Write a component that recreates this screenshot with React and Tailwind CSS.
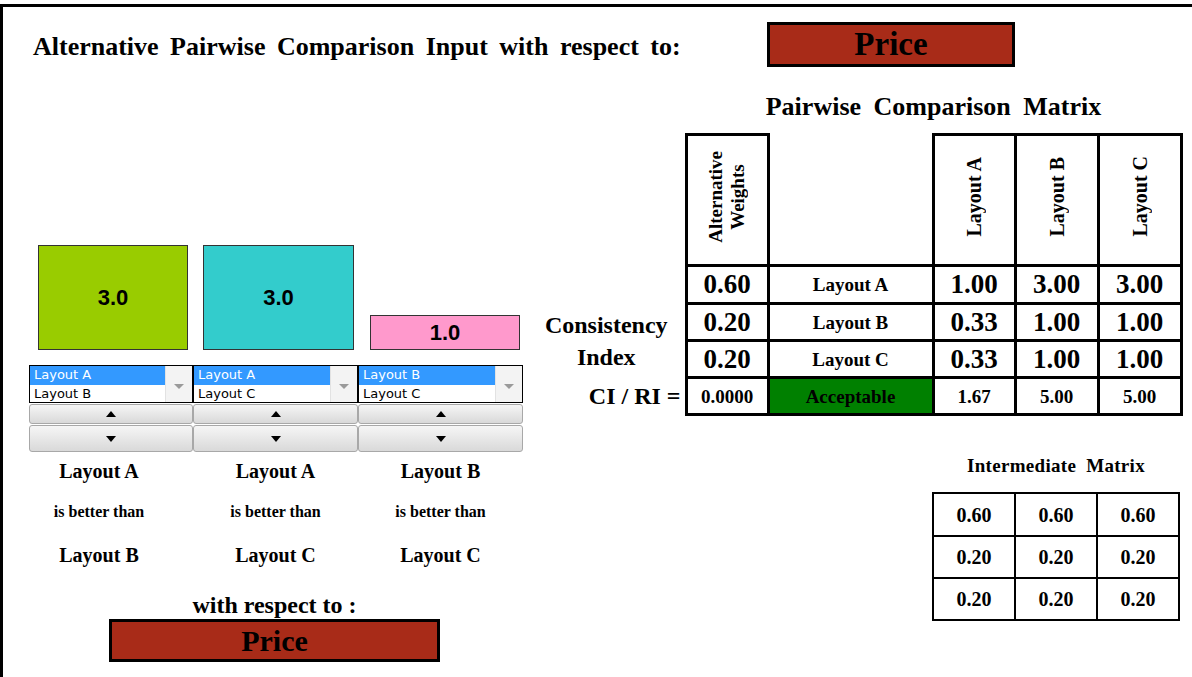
import React from 'react';

const serif = "font-['Liberation_Serif','Times_New_Roman',serif]";

const pairs = [
  { value: '3.0', color: 'bg-[#99cc00]', bar: 'ml-[35px] w-[150px] h-[105px]', top: 'Layout A', bottom: 'Layout B', box: 'Layout A', second: 'Layout B' },
  { value: '3.0', color: 'bg-[#33cccc]', bar: 'ml-[15px] w-[151px] h-[105px]', top: 'Layout A', bottom: 'Layout C', box: 'Layout A', second: 'Layout C' },
  { value: '1.0', color: 'bg-[#ff99cc]', bar: 'ml-[16px] w-[150px] h-[35px]', top: 'Layout B', bottom: 'Layout C', box: 'Layout B', second: 'Layout C' },
];

const labelCols = ['w-[158px]', 'w-[195px]', 'w-[135px]'];
const listCols = ['w-[164px]', 'w-[165px]', 'w-[165px]'];

const matrix = [
  ['0.60', 'Layout A', '1.00', '3.00', '3.00'],
  ['0.20', 'Layout B', '0.33', '1.00', '1.00'],
  ['0.20', 'Layout C', '0.33', '1.00', '1.00'],
];

const intermediate = [
  ['0.60', '0.60', '0.60'],
  ['0.20', '0.20', '0.20'],
  ['0.20', '0.20', '0.20'],
];

const cell = 'border-[3px] border-black text-center align-middle p-0';

function Triangle({ up }) {
  return up ? (
    <span className="block w-0 h-0 border-x-[5px] border-x-transparent border-b-[6px] border-b-black" />
  ) : (
    <span className="block w-0 h-0 border-x-[5px] border-x-transparent border-t-[6px] border-t-black" />
  );
}

function Spinner({ first, second, width }) {
  return (
    <div className={`${width} flex flex-col`}>
      <div className="h-[38px] border border-black flex bg-white font-['DejaVu_Sans',sans-serif] font-normal text-[13px] leading-[18px]">
        <div className="flex-1 flex flex-col">
          <div className="h-[19px] bg-[#3399ff] text-white pl-[4px]">{first}</div>
          <div className="h-[17px] text-black pl-[4px]">{second}</div>
        </div>
        <div className="w-[27px] bg-[#f3f3f3] border-l border-[#e2e2e2] flex items-center justify-center pt-[4px]">
          <span className="block w-0 h-0 border-x-[5px] border-x-transparent border-t-[5px] border-t-[#9a9a9a]" />
        </div>
      </div>
      <button className="mt-[1px] h-[20px] rounded-[3px] border border-[#a8a8a8] bg-gradient-to-b from-[#f6f6f6] to-[#d9d9d9] flex items-center justify-center">
        <Triangle up />
      </button>
      <button className="mt-[1px] h-[27px] rounded-[3px] border border-[#a8a8a8] bg-gradient-to-b from-[#f6f6f6] to-[#d9d9d9] flex items-center justify-center">
        <Triangle />
      </button>
    </div>
  );
}

export default function App() {
  return (
    <div className={`w-[1192px] h-[677px] overflow-hidden bg-white pt-[4px] ${serif} font-bold text-black`}>
      <div className="h-[673px] border-l-[3px] border-t-[3px] border-black">
        {/* title row */}
        <div className="flex items-center h-[45px] mt-[15px]">
          <h1 className="ml-[30px] w-[734px] text-[26px] leading-[28px] pt-[4px] [word-spacing:5px]">
            Alternative Pairwise Comparison Input with respect to:
          </h1>
          <div className="w-[248px] h-[45px] border-[3px] border-black bg-[#a82b18] flex items-center justify-center text-[33px] leading-none">
            Price
          </div>
        </div>

        <div className="flex">
          {/* left: comparison inputs */}
          <div className="w-[527px] flex flex-col">
            <div className="mt-[178px] h-[105px] flex items-end">
              {pairs.map((p, i) => (
                <div
                  key={i}
                  className={`${p.bar} ${p.color} border border-[#333] flex items-center justify-center font-['Liberation_Sans',Arial,sans-serif] text-[22px]`}
                >
                  {p.value}
                </div>
              ))}
            </div>

            <div className="mt-[15px] ml-[26px] flex">
              {pairs.map((p, i) => (
                <Spinner key={i} first={p.box} second={p.second} width={listCols[i]} />
              ))}
            </div>

            <div className="ml-[17px] flex">
              {pairs.map((p, i) => (
                <div key={i} className={`${labelCols[i]} flex flex-col items-center text-center`}>
                  <div className="h-[38px] flex items-center text-[20px]">{p.top}</div>
                  <div className="h-[44px] flex items-center text-[16px]">is better than</div>
                  <div className="h-[42px] flex items-center text-[20px]">{p.bottom}</div>
                </div>
              ))}
            </div>

            <div className="ml-[106px] w-[331px] h-[43px] flex items-end justify-center pb-[2px] text-[24px] leading-[24px]">
              with respect to :
            </div>
            <div className="ml-[106px] w-[331px] h-[43px] border-[3px] border-black bg-[#a82b18] flex items-center justify-center text-[30px] leading-none">
              Price
            </div>
          </div>

          {/* right: matrices */}
          <div className="w-[662px]">
            <div className="h-[66px] pt-[27px]">
              <div className="ml-[156px] w-[495px] text-center text-[26px] leading-[26px] [word-spacing:6px]">
                Pairwise Comparison Matrix
              </div>
            </div>

            <table className="border-collapse table-fixed w-[651px]">
              <colgroup>
                <col className="w-[156px]" />
                <col className="w-[82px]" />
                <col className="w-[165px]" />
                <col className="w-[82px]" />
                <col className="w-[83px]" />
                <col className="w-[83px]" />
              </colgroup>
              <tbody>
                <tr className="h-[131px]">
                  <td className="p-0" />
                  <td className={cell}>
                    <div className="inline-block [writing-mode:vertical-rl] rotate-180 text-[19px] leading-[22px] text-center">
                      Alternative
                      <br />
                      Weights
                    </div>
                  </td>
                  <td className="p-0 border-x-[3px] border-black" />
                  {['Layout A', 'Layout B', 'Layout C'].map((h) => (
                    <td key={h} className={cell}>
                      <div className="inline-block [writing-mode:vertical-rl] rotate-180 text-[20px] leading-[22px]">{h}</div>
                    </td>
                  ))}
                </tr>
                {matrix.map((row, r) => (
                  <tr key={r} className={r === 0 ? 'h-[38px]' : 'h-[37px]'}>
                    {r === 0 && <td className="p-0" />}
                    {r === 1 && (
                      <td rowSpan={2} className="p-0 pr-[2px] text-center align-middle text-[24px] leading-[32px]">
                        <div>Consistency</div>
                        <div>Index</div>
                      </td>
                    )}
                    <td className={`${cell} text-[27px] leading-none`}>{row[0]}</td>
                    <td className={`${cell} text-[19px] leading-none`}>{row[1]}</td>
                    {row.slice(2).map((v, c) => (
                      <td key={c} className={`${cell} text-[27px] leading-none`}>{v}</td>
                    ))}
                  </tr>
                ))}
                <tr className="h-[37px]">
                  <td className="p-0 pr-[4px] text-right text-[24px] leading-none">CI / RI =</td>
                  <td className={`${cell} text-[19px] leading-none`}>0.0000</td>
                  <td className={`${cell} bg-[#008000] text-[19px] leading-none`}>Acceptable</td>
                  {['1.67', '5.00', '5.00'].map((v, c) => (
                    <td key={c} className={`${cell} text-[19px] leading-none`}>{v}</td>
                  ))}
                </tr>
              </tbody>
            </table>

            <div className="ml-[402px] w-[248px] mt-[30px]">
              <div className="h-[40px] flex items-center justify-center text-[19px] tracking-[0.3px] [word-spacing:5px]">
                Intermediate Matrix
              </div>
              <table className="mt-[6px] border-collapse table-fixed w-[248px]">
                <tbody>
                  {intermediate.map((row, r) => (
                    <tr key={r} className={r === 0 ? 'h-[43px]' : 'h-[42px]'}>
                      {row.map((v, c) => (
                        <td key={c} className="border-2 border-black text-center align-middle p-0 text-[20px] leading-none">
                          {v}
                        </td>
                      ))}
                    </tr>
                  ))}
                </tbody>
              </table>
            </div>
          </div>
        </div>
      </div>
    </div>
  );
}
